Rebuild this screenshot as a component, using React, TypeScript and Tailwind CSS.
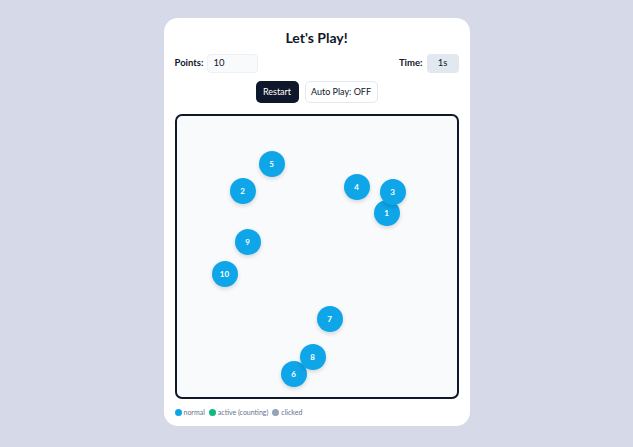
import React from "react";

const circles = [
  { n: 1, x: 197, y: 84 },
  { n: 2, x: 53, y: 62 },
  { n: 3, x: 203, y: 63 },
  { n: 4, x: 167, y: 58 },
  { n: 5, x: 82, y: 35 },
  { n: 6, x: 104, y: 245 },
  { n: 7, x: 140, y: 190 },
  { n: 8, x: 123, y: 228 },
  { n: 9, x: 58, y: 113 },
  { n: 10, x: 35, y: 145 },
];

export default function App() {
  return (
    <div
      className="w-[633px] h-[447px] bg-[#d6d9e8] flex justify-center pt-[18px]"
      style={{ fontFamily: 'Lato, "Noto Sans", sans-serif' }}
    >
      <div className="w-[306px] h-[408px] bg-white rounded-[14px] px-[11px] pt-[10px] flex flex-col">
        <h1 className="text-center text-[14px] font-bold text-[#0f172a] leading-[20px] h-[20px]">
          Let's Play!
        </h1>
        <div className="flex items-center justify-between mt-[6px] h-[19px]">
          <div className="flex items-center gap-[4px]">
            <span className="text-[9.5px] font-bold text-[#0f172a]">Points:</span>
            <div className="w-[51px] h-[19px] rounded-[4px] border border-[#eef0f3] bg-[#f9fafb] flex items-center px-[5px] text-[9.5px] text-[#0f172a]">
              10
            </div>
          </div>
          <div className="flex items-center gap-[4px]">
            <span className="text-[9.5px] font-bold text-[#0f172a]">Time:</span>
            <div className="w-[32px] h-[19px] rounded-[4px] bg-[#e2e8f0] flex items-center justify-center text-[9.5px] text-[#0f172a]">
              1s
            </div>
          </div>
        </div>
        <div className="flex justify-center gap-[6px] mt-[8px]">
          <button className="h-[22px] w-[43px] rounded-[5px] bg-[#0f172a] text-white text-[9px]">
            Restart
          </button>
          <button className="h-[22px] w-[73px] rounded-[5px] bg-white border border-[#e2e8f0] text-[#0f172a] text-[9px]">
            Auto Play: OFF
          </button>
        </div>
        <div className="relative mt-[11px] h-[285px] border-2 border-[#0f172a] rounded-[7px] bg-[#f8fafc] overflow-hidden">
          {circles.map((c) => (
            <div
              key={c.n}
              className="absolute w-[26px] h-[26px] rounded-full bg-[#0ea5e9] text-white text-[8px] font-bold flex items-center justify-center shadow-[0_2px_4px_rgba(0,0,0,0.15)]"
              style={{ left: c.x, top: c.y }}
            >
              {c.n}
            </div>
          ))}
        </div>
        <div className="flex items-center gap-[4px] mt-[8px] text-[7px] text-[#64748b]">
          <span className="flex items-center gap-[2px]">
            <span className="w-[7px] h-[7px] rounded-full bg-[#0ea5e9]" />
            normal
          </span>
          <span className="flex items-center gap-[2px]">
            <span className="w-[7px] h-[7px] rounded-full bg-[#10b981]" />
            active (counting)
          </span>
          <span className="flex items-center gap-[2px]">
            <span className="w-[7px] h-[7px] rounded-full bg-[#94a3b8]" />
            clicked
          </span>
        </div>
      </div>
    </div>
  );
}
